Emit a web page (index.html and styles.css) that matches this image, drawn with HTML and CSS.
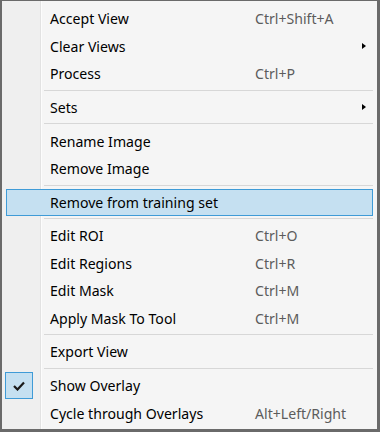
FILE: index.html
```html
<!DOCTYPE html>
<html lang="en">
<head>
  <meta charset="UTF-8">
  <title>Image Context Menu</title>
  <link rel="stylesheet" href="styles.css">
</head>
<body>
  <div class="menu">
    <div class="item"><span class="icon"></span><span class="label">Accept View</span><span class="keys">Ctrl+Shift+A</span></div>
    <div class="item"><span class="icon"></span><span class="label">Clear Views</span><span class="arrow"></span></div>
    <div class="item"><span class="icon"></span><span class="label">Process</span><span class="keys">Ctrl+P</span></div>
    <div class="sep"></div>
    <div class="item"><span class="icon"></span><span class="label">Sets</span><span class="arrow"></span></div>
    <div class="sep"></div>
    <div class="item"><span class="icon"></span><span class="label">Rename Image</span></div>
    <div class="item"><span class="icon"></span><span class="label">Remove Image</span></div>
    <div class="sep"></div>
    <div class="item hover"><span class="icon"></span><span class="label">Remove from training set</span></div>
    <div class="sep"></div>
    <div class="item"><span class="icon"></span><span class="label">Edit ROI</span><span class="keys">Ctrl+O</span></div>
    <div class="item"><span class="icon"></span><span class="label">Edit Regions</span><span class="keys">Ctrl+R</span></div>
    <div class="item"><span class="icon"></span><span class="label">Edit Mask</span><span class="keys">Ctrl+M</span></div>
    <div class="item"><span class="icon"></span><span class="label">Apply Mask To Tool</span><span class="keys">Ctrl+M</span></div>
    <div class="sep"></div>
    <div class="item"><span class="icon"></span><span class="label">Export View</span></div>
    <div class="sep"></div>
    <div class="item">
      <span class="icon checked">
        <svg width="12" height="10" viewBox="0 0 12 10"><path d="M1 5 L4.5 8.5 L11 1.5" fill="none" stroke="#1a1a1a" stroke-width="2.2"/></svg>
      </span>
      <span class="label">Show Overlay</span>
    </div>
    <div class="item"><span class="icon"></span><span class="label">Cycle through Overlays</span><span class="keys">Alt+Left/Right</span></div>
  </div>
</body>
</html>
```

FILE: styles.css
```css
html, body {
  margin: 0;
  padding: 0;
}
body {
  font-family: 'Noto Sans', 'Open Sans', Arial, sans-serif;
  font-size: 14.1px;
  color: #000;
  background: #fff;
}
.menu {
  width: 380px;
  height: 432px;
  box-sizing: border-box;
  border-style: solid;
  border-color: #6a6a6a;
  border-width: 1px 3px 3px 2px;
  padding-top: 4px;
  background: linear-gradient(to right, #efefef 38px, #e2e2e2 38px, #e2e2e2 39px, #fcfcfc 39px, #fcfcfc 40px, #f5f5f5 40px);
}
.item {
  display: flex;
  align-items: center;
  height: 27.4px;
  margin: 0 4px;
  border: 1px solid transparent;
  box-sizing: border-box;
}
.item.hover {
  background: #c5e0f1;
  border-color: #3f9bd7;
}
.icon {
  width: 28px;
  height: 27px;
  margin-left: -2px;
  margin-right: 17px;
  box-sizing: border-box;
  display: flex;
  align-items: center;
  justify-content: center;
  flex-shrink: 0;
}
.icon.checked {
  background: #c5e0f1;
  border: 1px solid #3f9bd7;
}
.label {
  width: 205px;
  flex-shrink: 0;
  white-space: nowrap;
}
.keys {
  color: #5c5c5c;
  white-space: nowrap;
}
.arrow {
  margin-left: auto;
  margin-right: 6px;
  width: 0;
  height: 0;
  border-left: 4px solid #000;
  border-top: 3.5px solid transparent;
  border-bottom: 3.5px solid transparent;
}
.sep {
  height: 1px;
  background: #d7d7d7;
  margin: 2.4px 4px 3px 42px;
}
```
